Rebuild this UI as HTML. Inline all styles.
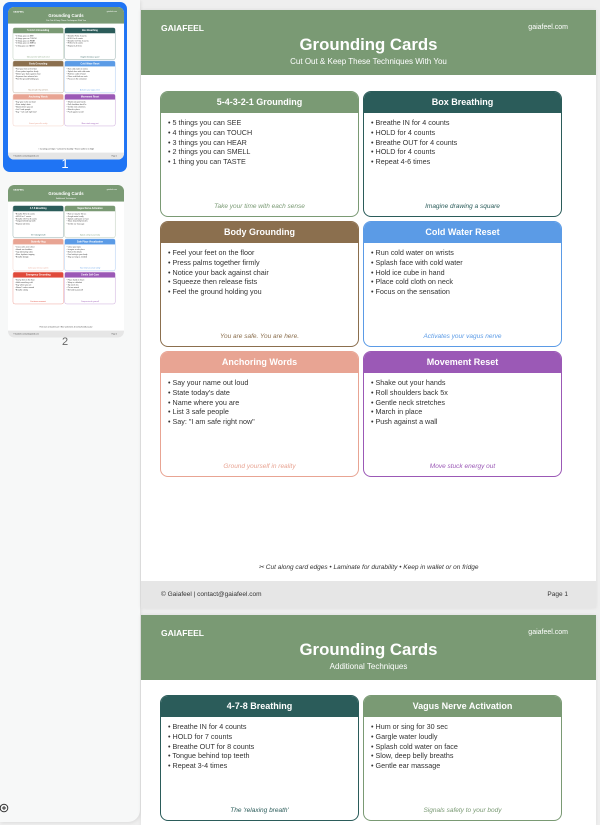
<!DOCTYPE html>
<html><head><meta charset="utf-8"><style>
*{margin:0;padding:0;box-sizing:border-box}
body{width:600px;height:825px;overflow:hidden;background:#efefef;font-family:"Liberation Sans",Arial,sans-serif;position:relative}
.side{position:absolute;left:0;top:0;width:140px;height:822px;background:#f7f8f8;border-radius:0 0 12px 0;box-shadow:1px 1px 3px rgba(0,0,0,.08)}
.sel{position:absolute;left:3px;top:2px;width:124px;height:170px;background:#1f74f4;border-radius:7px}
.lbl{position:absolute;width:130px;left:0;text-align:center;font-size:12px}
.page{position:absolute;width:455px;height:598px;background:#fff;overflow:hidden}
.hdr{position:absolute;left:0;top:0;width:455px;height:65px;background:#7a9a74;color:#fff}
.brand{position:absolute;left:20px;top:13px;font-size:8.5px;font-weight:bold}
.site{position:absolute;right:28px;top:14px;font-size:7px}
.title{position:absolute;left:0;width:100%;top:25px;text-align:center;font-size:16.8px;font-weight:bold}
.sub{position:absolute;left:0;width:100%;top:47px;text-align:center;font-size:8px}
.card{position:absolute;width:199px;height:126px;border:1.5px solid;border-radius:8px;overflow:hidden;background:#fff}
.card .h{height:21px;color:#fff;font-weight:bold;font-size:9px;text-align:center;line-height:21px}
.card ul{list-style:none;padding:5px 0 0 7px;font-size:7.2px;color:#333;line-height:9.8px}
.card .f{position:absolute;bottom:6px;left:0;width:100%;text-align:center;font-style:italic;font-size:6.5px}
.cut{position:absolute;top:553px;width:100%;text-align:center;font-size:6.5px;font-style:italic;color:#333}
.foot{position:absolute;left:0;top:571px;width:455px;height:27px;background:#e6e6e6;font-size:6.5px;color:#333}
.foot span{position:absolute;top:10px}
.thumb{position:absolute;transform-origin:0 0;transform:scale(0.255);border-radius:24px}
</style></head><body>
<div class="side">
<div class="sel"></div>
<div class="lbl" style="top:156px;color:#fff;font-size:13px">1</div>
<div class="lbl" style="top:336px;color:#666;font-size:11px">2</div>
<svg style="position:absolute;left:0;top:803px" width="10" height="10" viewBox="0 0 10 10"><circle cx="4" cy="5" r="3.8" fill="none" stroke="#333" stroke-width="1"/><path d="M4 3v4M2 5h4" stroke="#333" stroke-width="1"/></svg>
</div>

<div class="page" style="left:141px;top:10px;box-shadow:0 0 4px rgba(0,0,0,.08)">
<div class="hdr"><div class="brand">GAIAFEEL</div><div class="site">gaiafeel.com</div><div class="title">Grounding Cards</div><div class="sub">Cut Out &amp; Keep These Techniques With You</div></div>
<div class="card" style="left:19px;top:81px;border-color:#7a9a74"><div class="h" style="background:#7a9a74">5-4-3-2-1 Grounding</div><ul><li>• 5 things you can SEE</li><li>• 4 things you can TOUCH</li><li>• 3 things you can HEAR</li><li>• 2 things you can SMELL</li><li>• 1 thing you can TASTE</li></ul><div class="f" style="color:#7a9a74">Take your time with each sense</div></div>
<div class="card" style="left:222px;top:81px;border-color:#2b5c5a"><div class="h" style="background:#2b5c5a">Box Breathing</div><ul><li>• Breathe IN for 4 counts</li><li>• HOLD for 4 counts</li><li>• Breathe OUT for 4 counts</li><li>• HOLD for 4 counts</li><li>• Repeat 4-6 times</li></ul><div class="f" style="color:#2b5c5a">Imagine drawing a square</div></div>
<div class="card" style="left:19px;top:211px;border-color:#8b6f4e"><div class="h" style="background:#8b6f4e">Body Grounding</div><ul><li>• Feel your feet on the floor</li><li>• Press palms together firmly</li><li>• Notice your back against chair</li><li>• Squeeze then release fists</li><li>• Feel the ground holding you</li></ul><div class="f" style="color:#8b6f4e">You are safe. You are here.</div></div>
<div class="card" style="left:222px;top:211px;border-color:#5b9be6"><div class="h" style="background:#5b9be6">Cold Water Reset</div><ul><li>• Run cold water on wrists</li><li>• Splash face with cold water</li><li>• Hold ice cube in hand</li><li>• Place cold cloth on neck</li><li>• Focus on the sensation</li></ul><div class="f" style="color:#5b9be6">Activates your vagus nerve</div></div>
<div class="card" style="left:19px;top:341px;border-color:#e8a493"><div class="h" style="background:#e8a493">Anchoring Words</div><ul><li>• Say your name out loud</li><li>• State today's date</li><li>• Name where you are</li><li>• List 3 safe people</li><li>• Say: "I am safe right now"</li></ul><div class="f" style="color:#e8a493">Ground yourself in reality</div></div>
<div class="card" style="left:222px;top:341px;border-color:#9b59b6"><div class="h" style="background:#9b59b6">Movement Reset</div><ul><li>• Shake out your hands</li><li>• Roll shoulders back 5x</li><li>• Gentle neck stretches</li><li>• March in place</li><li>• Push against a wall</li></ul><div class="f" style="color:#9b59b6">Move stuck energy out</div></div>
<div class="cut">✂ Cut along card edges • Laminate for durability • Keep in wallet or on fridge</div>
<div class="foot"><span style="left:20px">© Gaiafeel | contact@gaiafeel.com</span><span style="right:28px">Page 1</span></div>
</div>

<div class="page" style="left:141px;top:615px;height:210px;box-shadow:0 0 4px rgba(0,0,0,.08)">
<div class="hdr"><div class="brand">GAIAFEEL</div><div class="site">gaiafeel.com</div><div class="title">Grounding Cards</div><div class="sub">Additional Techniques</div></div>
<div class="card" style="left:19px;top:80px;border-color:#2b5c5a"><div class="h" style="background:#2b5c5a">4-7-8 Breathing</div><ul><li>• Breathe IN for 4 counts</li><li>• HOLD for 7 counts</li><li>• Breathe OUT for 8 counts</li><li>• Tongue behind top teeth</li><li>• Repeat 3-4 times</li></ul><div class="f" style="color:#2b5c5a">The 'relaxing breath'</div></div>
<div class="card" style="left:222px;top:80px;border-color:#7a9a74"><div class="h" style="background:#7a9a74">Vagus Nerve Activation</div><ul><li>• Hum or sing for 30 sec</li><li>• Gargle water loudly</li><li>• Splash cold water on face</li><li>• Slow, deep belly breaths</li><li>• Gentle ear massage</li></ul><div class="f" style="color:#7a9a74">Signals safety to your body</div></div>
</div>

<div class="page thumb" style="left:8px;top:7px">
<div class="hdr"><div class="brand">GAIAFEEL</div><div class="site">gaiafeel.com</div><div class="title">Grounding Cards</div><div class="sub">Cut Out &amp; Keep These Techniques With You</div></div>
<div class="card" style="left:19px;top:81px;border-color:#7a9a74"><div class="h" style="background:#7a9a74">5-4-3-2-1 Grounding</div><ul><li>• 5 things you can SEE</li><li>• 4 things you can TOUCH</li><li>• 3 things you can HEAR</li><li>• 2 things you can SMELL</li><li>• 1 thing you can TASTE</li></ul><div class="f" style="color:#7a9a74">Take your time with each sense</div></div>
<div class="card" style="left:222px;top:81px;border-color:#2b5c5a"><div class="h" style="background:#2b5c5a">Box Breathing</div><ul><li>• Breathe IN for 4 counts</li><li>• HOLD for 4 counts</li><li>• Breathe OUT for 4 counts</li><li>• HOLD for 4 counts</li><li>• Repeat 4-6 times</li></ul><div class="f" style="color:#2b5c5a">Imagine drawing a square</div></div>
<div class="card" style="left:19px;top:211px;border-color:#8b6f4e"><div class="h" style="background:#8b6f4e">Body Grounding</div><ul><li>• Feel your feet on the floor</li><li>• Press palms together firmly</li><li>• Notice your back against chair</li><li>• Squeeze then release fists</li><li>• Feel the ground holding you</li></ul><div class="f" style="color:#8b6f4e">You are safe. You are here.</div></div>
<div class="card" style="left:222px;top:211px;border-color:#5b9be6"><div class="h" style="background:#5b9be6">Cold Water Reset</div><ul><li>• Run cold water on wrists</li><li>• Splash face with cold water</li><li>• Hold ice cube in hand</li><li>• Place cold cloth on neck</li><li>• Focus on the sensation</li></ul><div class="f" style="color:#5b9be6">Activates your vagus nerve</div></div>
<div class="card" style="left:19px;top:341px;border-color:#e8a493"><div class="h" style="background:#e8a493">Anchoring Words</div><ul><li>• Say your name out loud</li><li>• State today's date</li><li>• Name where you are</li><li>• List 3 safe people</li><li>• Say: "I am safe right now"</li></ul><div class="f" style="color:#e8a493">Ground yourself in reality</div></div>
<div class="card" style="left:222px;top:341px;border-color:#9b59b6"><div class="h" style="background:#9b59b6">Movement Reset</div><ul><li>• Shake out your hands</li><li>• Roll shoulders back 5x</li><li>• Gentle neck stretches</li><li>• March in place</li><li>• Push against a wall</li></ul><div class="f" style="color:#9b59b6">Move stuck energy out</div></div>
<div class="cut">✂ Cut along card edges • Laminate for durability • Keep in wallet or on fridge</div>
<div class="foot"><span style="left:20px">© Gaiafeel | contact@gaiafeel.com</span><span style="right:28px">Page 1</span></div>
</div>

<div class="page thumb" style="left:8px;top:185px">
<div class="hdr"><div class="brand">GAIAFEEL</div><div class="site">gaiafeel.com</div><div class="title">Grounding Cards</div><div class="sub">Additional Techniques</div></div>
<div class="card" style="left:19px;top:81px;border-color:#2b5c5a"><div class="h" style="background:#2b5c5a">4-7-8 Breathing</div><ul><li>• Breathe IN for 4 counts</li><li>• HOLD for 7 counts</li><li>• Breathe OUT for 8 counts</li><li>• Tongue behind top teeth</li><li>• Repeat 3-4 times</li></ul><div class="f" style="color:#2b5c5a">The 'relaxing breath'</div></div>
<div class="card" style="left:222px;top:81px;border-color:#7a9a74"><div class="h" style="background:#7a9a74">Vagus Nerve Activation</div><ul><li>• Hum or sing for 30 sec</li><li>• Gargle water loudly</li><li>• Splash cold water on face</li><li>• Slow, deep belly breaths</li><li>• Gentle ear massage</li></ul><div class="f" style="color:#7a9a74">Signals safety to your body</div></div>
<div class="card" style="left:19px;top:211px;border-color:#e8a493"><div class="h" style="background:#e8a493">Butterfly Hug</div><ul><li>• Cross arms over chest</li><li>• Hands on shoulders</li><li>• Tap alternating sides</li><li>• Slow, rhythmic tapping</li><li>• Breathe deeply</li></ul><div class="f" style="color:#e8a493">Calms your nervous system</div></div>
<div class="card" style="left:222px;top:211px;border-color:#5b9be6"><div class="h" style="background:#5b9be6">Safe Place Visualization</div><ul><li>• Close your eyes</li><li>• Imagine a safe place</li><li>• Notice the details</li><li>• Feel safety in your body</li><li>• Stay as long as needed</li></ul><div class="f" style="color:#5b9be6">Your mind can create safety</div></div>
<div class="card" style="left:19px;top:341px;border-color:#e04a3a"><div class="h" style="background:#e04a3a">Emergency Grounding</div><ul><li>• Stamp feet on the floor</li><li>• Hold something cold</li><li>• Say where you are</li><li>• Name 5 colors around</li><li>• Breathe slowly</li></ul><div class="f" style="color:#e04a3a">For intense moments</div></div>
<div class="card" style="left:222px;top:341px;border-color:#9b59b6"><div class="h" style="background:#9b59b6">Gentle Self-Care</div><ul><li>• Place hand on heart</li><li>• Wrap in a blanket</li><li>• Sip warm tea</li><li>• Pet an animal</li><li>• Be kind to yourself</li></ul><div class="f" style="color:#9b59b6">Compassion for yourself</div></div>
<div class="cut">Print more at Gaiafeel.com • More worksheets for mental health practice</div>
<div class="foot"><span style="left:20px">© Gaiafeel | contact@gaiafeel.com</span><span style="right:28px">Page 2</span></div>
</div>
</body></html>
